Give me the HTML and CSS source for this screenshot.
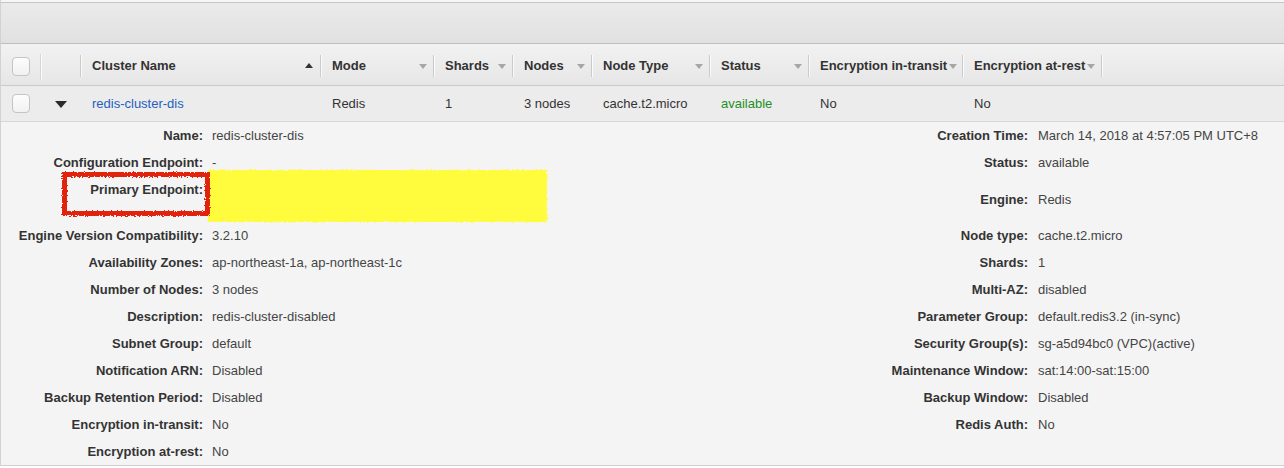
FILE: index.html
```html
<!DOCTYPE html>
<html>
<head>
<meta charset="utf-8">
<link rel="stylesheet" href="styles.css">
</head>
<body>
<div class="page">
  <div class="topstrip"></div>
  <div class="toolbar"></div>
  <div class="thead">
    <div class="th"><div class="th-in"><span class="cb"></span></div></div>
    <div class="th"><div class="th-in"></div></div>
    <div class="th"><div class="th-in"><span>Cluster Name</span><span class="arr-up"></span></div></div>
    <div class="th"><div class="th-in"><span>Mode</span><span class="arr-dn"></span></div></div>
    <div class="th"><div class="th-in"><span>Shards</span><span class="arr-dn"></span></div></div>
    <div class="th"><div class="th-in"><span>Nodes</span><span class="arr-dn"></span></div></div>
    <div class="th"><div class="th-in"><span>Node Type</span><span class="arr-dn"></span></div></div>
    <div class="th"><div class="th-in"><span>Status</span><span class="arr-dn"></span></div></div>
    <div class="th"><div class="th-in tight"><span>Encryption in-transit</span><span class="arr-dn"></span></div></div>
    <div class="th"><div class="th-in tight"><span>Encryption at-rest</span><span class="arr-dn"></span></div></div>
    <div class="th th-rest"></div>
  </div>
  <div class="trow">
    <div class="td"><span class="cb"></span></div>
    <div class="td td-exp"><span class="exp"></span></div>
    <div class="td"><span class="link">redis-cluster-dis</span></div>
    <div class="td">Redis</div>
    <div class="td">1</div>
    <div class="td">3 nodes</div>
    <div class="td">cache.t2.micro</div>
    <div class="td green">available</div>
    <div class="td">No</div>
    <div class="td">No</div>
    <div class="td"></div>
  </div>
  <div class="detail">
    <div class="col-left">
      <div class="drow"><span class="dl">Name:</span><span class="dv">redis-cluster-dis</span></div>
      <div class="drow"><span class="dl">Configuration Endpoint:</span><span class="dv">-</span></div>
      <div class="drow h46"><span class="dl">Primary Endpoint:</span><span class="dv"></span></div>
      <div class="drow"><span class="dl">Engine Version Compatibility:</span><span class="dv">3.2.10</span></div>
      <div class="drow"><span class="dl">Availability Zones:</span><span class="dv">ap-northeast-1a, ap-northeast-1c</span></div>
      <div class="drow"><span class="dl">Number of Nodes:</span><span class="dv">3 nodes</span></div>
      <div class="drow"><span class="dl">Description:</span><span class="dv">redis-cluster-disabled</span></div>
      <div class="drow"><span class="dl">Subnet Group:</span><span class="dv">default</span></div>
      <div class="drow"><span class="dl">Notification ARN:</span><span class="dv">Disabled</span></div>
      <div class="drow"><span class="dl">Backup Retention Period:</span><span class="dv">Disabled</span></div>
      <div class="drow"><span class="dl">Encryption in-transit:</span><span class="dv">No</span></div>
      <div class="drow"><span class="dl">Encryption at-rest:</span><span class="dv">No</span></div>
    </div>
    <div class="col-right">
      <div class="drow"><span class="dl">Creation Time:</span><span class="dv">March 14, 2018 at 4:57:05 PM UTC+8</span></div>
      <div class="drow h37"><span class="dl">Status:</span><span class="dv">available</span></div>
      <div class="drow h36"><span class="dl">Engine:</span><span class="dv">Redis</span></div>
      <div class="drow"><span class="dl">Node type:</span><span class="dv">cache.t2.micro</span></div>
      <div class="drow"><span class="dl">Shards:</span><span class="dv">1</span></div>
      <div class="drow"><span class="dl">Multi-AZ:</span><span class="dv">disabled</span></div>
      <div class="drow"><span class="dl">Parameter Group:</span><span class="dv">default.redis3.2 (in-sync)</span></div>
      <div class="drow"><span class="dl">Security Group(s):</span><span class="dv">sg-a5d94bc0 (VPC)(active)</span></div>
      <div class="drow"><span class="dl">Maintenance Window:</span><span class="dv">sat:14:00-sat:15:00</span></div>
      <div class="drow"><span class="dl">Backup Window:</span><span class="dv">Disabled</span></div>
      <div class="drow"><span class="dl">Redis Auth:</span><span class="dv">No</span></div>
    </div>
    <svg class="marks" width="600" height="120" viewBox="0 0 600 120">
      <defs>
        <filter id="rough" x="-10%" y="-10%" width="120%" height="120%">
          <feTurbulence type="fractalNoise" baseFrequency="0.9" numOctaves="2" seed="3" result="n"/>
          <feDisplacementMap in="SourceGraphic" in2="n" scale="4" xChannelSelector="R" yChannelSelector="G"/>
        </filter>
      </defs>
      <rect x="208" y="48" width="339" height="52" fill="#fffb3c" filter="url(#rough)"/>
      <rect x="64.5" y="52.5" width="143" height="39" fill="none" stroke="#e1230f" stroke-width="5" filter="url(#rough)"/>
    </svg>
  </div>
</div>
</body>
</html>
```

FILE: styles.css
```css
* { box-sizing: border-box; }
html, body { margin: 0; padding: 0; background: #fff; }
body {
  font-family: "Liberation Sans", Arial, Helvetica, sans-serif;
  font-size: 13px;
  color: #444;
  width: 1284px;
  height: 468px;
  overflow: hidden;
}
.page { border-left: 1px solid #d2d2d2; }
.topstrip { height: 2px; background: #f6f6f6; }
.toolbar {
  height: 42px;
  border-top: 1px solid #c6c6c6;
  border-bottom: 1px solid #bdbdbd;
  background: linear-gradient(#eaeaea, #e1e1e1);
}
.thead, .trow {
  display: grid;
  grid-template-columns: 40px 40px 240px 113px 79px 79px 118px 99px 154px 139px 1fr;
}
.thead {
  height: 42px;
  border-bottom: 1px solid #c9c9c9;
  background: linear-gradient(#f2f2f2, #e6e6e6);
}
.th { display: flex; align-items: center; }
.th-in {
  flex: 1;
  height: 22px;
  margin-top: 2px;
  display: flex;
  align-items: center;
  justify-content: space-between;
  padding: 0 6px 0 11px;
  border-right: 1px solid #cacaca;
  box-shadow: 1px 0 0 #fbfbfb;
  font-weight: bold;
  color: #333;
  white-space: nowrap;
}
.th-in.tight { justify-content: flex-start; gap: 2px; padding-right: 2px; }
.th:first-child .th-in { height: 26px; margin-top: 4px; border-right-color: #d6d6d6; }
.arr-dn {
  width: 0; height: 0;
  border-left: 4px solid transparent;
  border-right: 4px solid transparent;
  border-top: 5px solid #a6a6a6;
  margin-top: 1px;
}
.arr-up {
  width: 0; height: 0;
  border-left: 4px solid transparent;
  border-right: 4px solid transparent;
  border-bottom: 5px solid #333;
  margin-right: 1px;
}
.cb {
  display: inline-block;
  width: 18px; height: 19px;
  border: 1px solid #c4c4c4;
  border-radius: 4px;
  background: linear-gradient(#fdfdfd, #f1f1f1);
}
.trow {
  height: 36px;
  border-bottom: 1px solid #d7d7d7;
  background: #ececec;
}
.td {
  display: flex;
  align-items: center;
  padding-left: 11px;
  white-space: nowrap;
  color: #333;
}
.td-exp { padding-left: 14px; padding-top: 2px; }
.exp {
  width: 0; height: 0;
  border-left: 6px solid transparent;
  border-right: 6px solid transparent;
  border-top: 7px solid #2b2b2b;
}
.link { color: #1f5fbf; }
.green { color: #1f8f1f; }
.detail {
  position: relative;
  height: 344px;
  border-bottom: 1px solid #cfcfcf;
  background: #f4f4f4;
  display: flex;
  justify-content: space-between;
}
.col-left { width: 560px; }
.col-right { width: 435px; }
.drow {
  display: flex;
  align-items: flex-start;
  height: 27px;
  line-height: 27px;
  white-space: nowrap;
}
.drow.h46 { height: 46px; }
.drow.h37 { height: 37px; }
.drow.h36 { height: 36px; }
.dl {
  font-weight: bold;
  color: #333;
  text-align: right;
}
.col-left .dl { width: 202px; }
.col-left .dv { padding-left: 9px; }
.col-right .dl { width: 179px; }
.col-right .dv { padding-left: 10px; }
.dv { color: #444; }
.marks { position: absolute; left: -1px; top: 0; pointer-events: none; }
```
